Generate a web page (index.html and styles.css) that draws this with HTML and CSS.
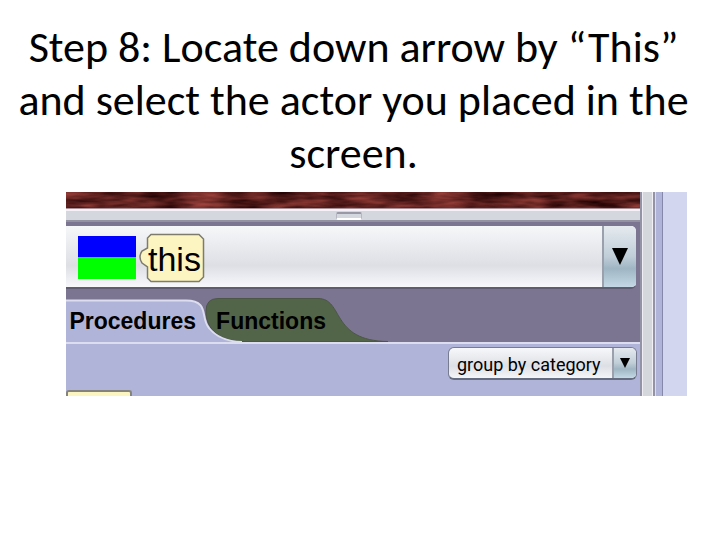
FILE: index.html
```
<!DOCTYPE html>
<html lang="en">
<head>
  <meta charset="UTF-8">
  <meta name="viewport" content="width=device-width, initial-scale=1.0">
  <title>Step 8</title>
  <link rel="stylesheet" href="styles.css">
</head>
<body>
  <h1>Step 8: Locate down arrow by “This” and select the actor you placed in the screen.</h1>

  <main class="editor">
    <div class="panel">
      <svg class="scene" aria-hidden="true">
        <filter id="wood" x="0" y="0" width="100%" height="100%" color-interpolation-filters="sRGB">
          <feTurbulence type="fractalNoise" baseFrequency="0.025 0.13" numOctaves="3" seed="4"/>
          <feColorMatrix values="0.7 0 0 0 0.02  0.36 0 0 0 -0.05  0.32 0 0 0 -0.04  0 0 0 0 1"/>
        </filter>
        <rect width="100%" height="100%" filter="url(#wood)"/>
      </svg>
      <div class="splitter"><span class="grip"></span></div>

      <div class="instance-row">
        <div class="instance">
          <div class="choice">
            <span class="swatch"></span>
            <svg class="chip" width="66" height="50" viewBox="0 0 66 50" aria-hidden="true">
              <path d="M12 1.500H60L64.500 6V44L60 48.500H12L8.500 45V34L3 30Q-1 24 3 18L8.500 15V5Z" fill="#fdf5c1" stroke="#7e7b6c" stroke-width="1.500"/>
            </svg>
          </div>
          <span class="arrow">
            <svg width="16" height="17" viewBox="0 0 16 17" aria-hidden="true"><path d="M0 0H16L8 17Z"/></svg>
          </span>
          <select class="instance-select" aria-label="Instance">
            <option>this</option>
          </select>
        </div>
      </div>

      <div class="tabs">
        <svg class="tab-shapes" width="574" height="46" viewBox="0 0 574 46" aria-hidden="true">
          <path d="M140 14Q140 1.500 152 1.500H252C278 1.500 264 44 322 44.500H173C150 42 140 30 140 14Z" fill="#536548" stroke="#4c5647"/>
          <path d="M0 3.500H120C144 3.500 134 21 143 31Q153 44 176 45V46H0Z" fill="#b1b4d9"/>
          <path d="M0 3.500H120C144 3.500 134 21 143 31Q153 44 176 45" fill="none" stroke="#dcdeef" stroke-width="2"/>
        </svg>
        <button class="tab procedures">Procedures</button>
        <button class="tab functions">Functions</button>
      </div>

      <div class="members">
        <div class="group">
          <select class="group-select" aria-label="Grouping">
            <option>group by category</option>
          </select>
          <span class="arrow">
            <svg width="10" height="10" viewBox="0 0 10 10" aria-hidden="true"><path d="M0 0H10L5 10Z"/></svg>
          </span>
        </div>
        <div class="block"></div>
      </div>
    </div>

    <div class="divider"></div>
    <div class="gutter"></div>
    <div class="code"></div>
  </main>
</body>
</html>
```
FILE: styles.css
```
* {
  box-sizing: border-box;
}

body {
  margin: 0;
  padding: 21px 33px 0 66px;
  background: #fff;
  color: #000;
  font-family: "Liberation Sans", Arial, sans-serif;
}

h1 {
  margin: 0 -8px 12px -54px;
  font-family: Carlito, Calibri, Lato, sans-serif;
  font-size: 44px;
  font-weight: normal;
  line-height: 53px;
  text-align: center;
}

button,
select {
  margin: 0;
  padding: 0;
  border: none;
  background: none;
  color: #000;
  font-family: inherit;
  appearance: none;
}

.editor {
  display: flex;
  overflow: hidden;
}

.panel {
  flex: 1;
  min-width: 0;
  background: #7b7591;
}

.scene {
  display: block;
  width: 100%;
  height: 16px;
}

.splitter {
  display: flex;
  justify-content: center;
  height: 14px;
  padding: 1px 8px 0 0;
  border-top: 1px solid #a98f96;
  border-bottom: 2px solid #9392a3;
  background: linear-gradient(#f4f2f8 2px, #d5d7df 2px);
}

.grip {
  width: 26px;
  height: 8px;
  margin-top: 2px;
  border: 1px solid #b5b6bf;
  border-top: 2px solid #9899a4;
  border-bottom: 2px solid #fff;
  border-radius: 2px;
}

.instance-row {
  padding: 4px 4px 8px 0;
}

.instance {
  display: grid;
  grid-template-columns: 1fr 34px;
  height: 63px;
  border-bottom: 2px solid #5f5c72;
  border-radius: 0 5px 5px 0;
  background: linear-gradient(#f6f7f9, #dddfe5 65%, #f8f8fb);
  overflow: hidden;
}

.choice {
  display: flex;
  grid-area: 1 / 1;
  align-items: center;
  gap: 3px;
  padding: 2px 0 0 12px;
}

.swatch {
  width: 58px;
  height: 43px;
  background: linear-gradient(#00f 50%, #0f0 50%);
}

.arrow {
  display: flex;
  align-items: center;
  justify-content: center;
  border-left: 2px solid #9aa1ad;
  background: linear-gradient(#e5eaef, #c0ced8 50%, #9fb5c3 70%, #c4d9e5);
}

.instance .arrow {
  grid-area: 1 / 2;
}

.instance-select {
  grid-area: 1 / 1 / 2 / 3;
  padding: 4px 0 0 82px;
  font-size: 34px;
}

.tabs {
  display: grid;
  grid-template-columns: 130px 130px 1fr;
  height: 47px;
  border-bottom: 2px solid #dcdeef;
  overflow: hidden;
}

.tab-shapes {
  grid-area: 1 / 1 / 2 / 4;
}

.tab {
  display: flex;
  grid-row: 1;
  align-items: center;
  justify-content: flex-end;
  padding-top: 2px;
  font-size: 23px;
  font-weight: bold;
}

.procedures {
  grid-column: 1;
}

.functions {
  grid-column: 2;
}

.members {
  display: flex;
  flex-direction: column;
  align-items: flex-end;
  padding: 3px 3px 0 0;
  background: #b1b4d9;
}

.group {
  display: grid;
  grid-template-columns: 1fr 24px;
  width: 189px;
  height: 33px;
  border: 1px solid #777c91;
  border-bottom: 2px solid #656c80;
  border-radius: 6px;
  background: linear-gradient(#f7f8fa, #dcdfe5 60%, #f4f5f8);
  overflow: hidden;
}

.group-select {
  grid-area: 1 / 1 / 2 / 3;
  padding: 2px 0 0 8px;
  font-family: Roboto, "Liberation Sans", sans-serif;
  font-size: 18px;
}

.group .arrow {
  grid-area: 1 / 2;
  pointer-events: none;
}

.block {
  align-self: flex-start;
  width: 66px;
  height: 6px;
  margin-top: 10px;
  border: 2px solid #85847c;
  border-bottom: none;
  border-radius: 3px 3px 0 0;
  background: #fdf5c1;
}

.divider {
  width: 16px;
  background: linear-gradient(to right, #9293a5 2px, #eeeef4 2px, #eeeef4 3px, #d4d7dc 3px, #d4d7dc 12px, #f0f0f6 12px, #f0f0f6 13px, #9293a5 13px, #9293a5 15px, #dcdeef 15px);
}

.gutter {
  width: 7px;
  border-right: 1px solid #8588a8;
  background: #b1b4d9;
}

.code {
  width: 24px;
  background: #d3d6ef;
}
```
